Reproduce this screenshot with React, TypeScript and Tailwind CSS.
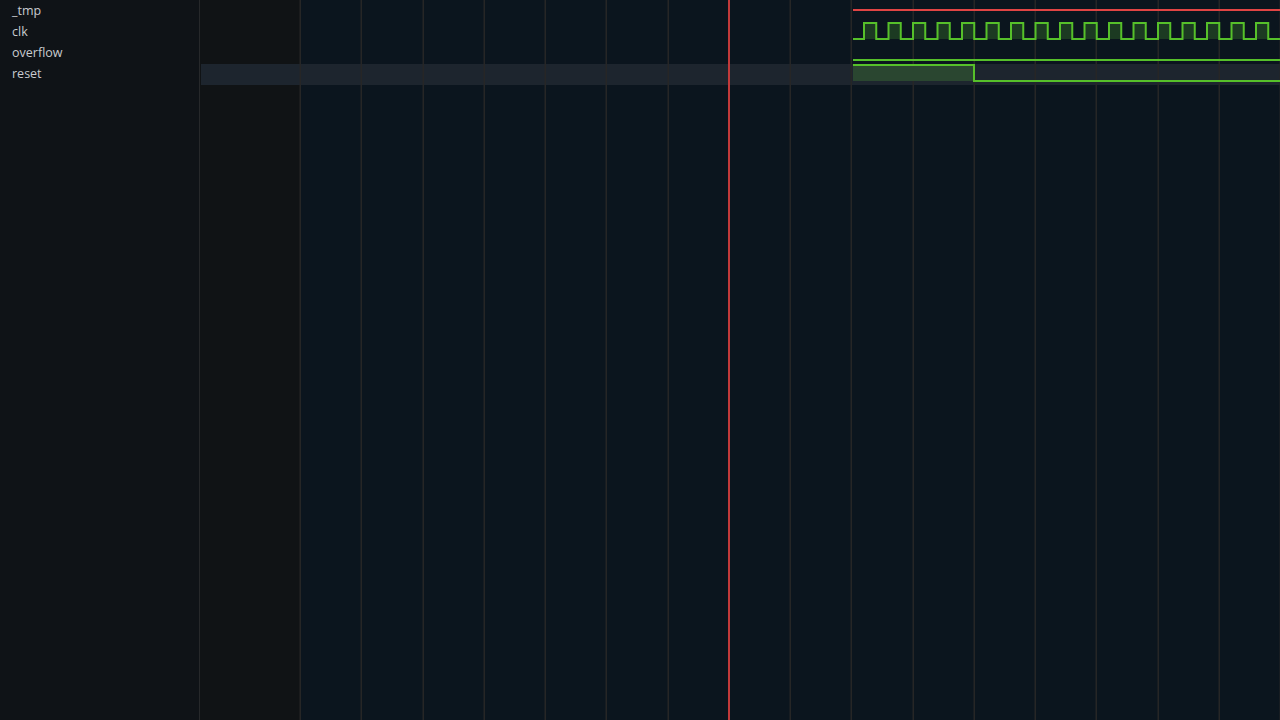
import React from "react";

const labels = ["_tmp", "clk", "overflow", "reset"];

function buildClk() {
  const startX = 853;
  const endX = 1280;
  const hi = 23;
  const lo = 39;
  let d = `M ${startX} ${lo}`;
  const fills: { x: number; w: number }[] = [];
  let x = 864;
  d += ` L ${x} ${lo}`;
  while (x < endX) {
    const fall = Math.min(x + 12.25, endX);
    d += ` L ${x} ${hi} L ${fall} ${hi}`;
    fills.push({ x, w: fall - x });
    if (fall >= endX) break;
    const rise = Math.min(fall + 12.25, endX);
    d += ` L ${fall} ${lo} L ${rise} ${lo}`;
    x = rise;
  }
  return { d, fills };
}

export default function App() {
  const grid: number[] = [];
  for (let k = 0; k <= 16; k++) grid.push(300 + 61.25 * k);
  const clk = buildClk();
  return (
    <div className="flex h-[720px] w-[1280px] overflow-hidden bg-[#0b151e]" style={{ fontFamily: '"Open Sans", "Noto Sans", sans-serif' }}>
      <div className="flex w-[200px] shrink-0 flex-col border-r border-[#26282a] bg-[#0f1317] pt-0">
        {labels.map((l) => (
          <div key={l} className="h-[21px] pl-[12px] text-[12.5px] leading-[21px] text-[#c8cbcf]">
            {l}
          </div>
        ))}
      </div>
      <div className="relative flex-1">
        <svg width={1080} height={720} viewBox="200 0 1080 720" className="block">
          <rect x={200} y={0} width={100} height={720} fill="#101315" />
          <rect x={201} y={64} width={1079} height={21} fill="#1d252e" />
          {grid.map((gx, i) =>
            i === 7 ? null : (
              <rect key={i} x={Math.round(gx) - 0.5} y={0} width={1.5} height={720} fill="#262626" />
            )
          )}
          <line x1={853} y1={10} x2={1280} y2={10} stroke="#e04444" strokeWidth={2} />
          {clk.fills.map((f, i) => (
            <rect key={i} x={f.x} y={23} width={f.w} height={16} fill="#1c3a22" />
          ))}
          <path d={clk.d} fill="none" stroke="#56c02a" strokeWidth={2} />
          <line x1={853} y1={60} x2={1280} y2={60} stroke="#56c02a" strokeWidth={2} />
          <rect x={853} y={65} width={121} height={16} fill="#2a4630" />
          <path d="M 853 65 L 974 65 L 974 81 L 1280 81" fill="none" stroke="#56c02a" strokeWidth={2} />
          <rect x={728} y={0} width={2} height={720} fill="#c23a3a" />
        </svg>
      </div>
    </div>
  );
}
